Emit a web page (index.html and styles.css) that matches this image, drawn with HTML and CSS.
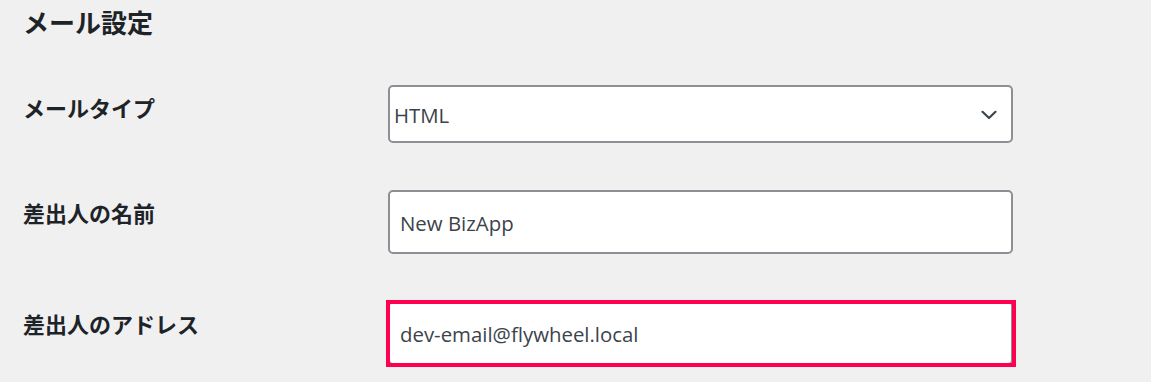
FILE: index.html
```html
<!DOCTYPE html>
<html lang="ja">
<head>
<meta charset="utf-8">
<title>メール設定</title>
<link rel="stylesheet" href="styles.css">
</head>
<body>
<main class="page">
  <h2 class="title">メール設定</h2>
  <div class="form">
    <div class="row">
      <label class="label" for="type">メールタイプ</label>
      <div class="field">
        <div class="select" id="type">
          <span class="value">HTML</span>
          <svg class="chev" width="16" height="10" viewBox="0 0 16 10" aria-hidden="true"><path d="M1.5 1.8 L8 8 L14.5 1.8" fill="none" stroke="#3c434a" stroke-width="2.2" stroke-linecap="round" stroke-linejoin="round"/></svg>
        </div>
      </div>
    </div>
    <div class="row">
      <label class="label" for="name">差出人の名前</label>
      <div class="field">
        <div class="input" id="name">New BizApp</div>
      </div>
    </div>
    <div class="row">
      <label class="label" for="addr">差出人のアドレス</label>
      <div class="field">
        <div class="input" id="addr">dev-email@flywheel.local</div>
        <div class="highlight"></div>
      </div>
    </div>
  </div>
</main>
</body>
</html>
```

FILE: styles.css
```css
html, body {
  margin: 0;
  padding: 0;
  background: #f0f0f1;
}
body {
  width: 1151px;
  height: 382px;
  overflow: hidden;
  font-family: "Noto Sans CJK JP", "Noto Sans", sans-serif;
  color: #1d2327;
}
.page {
  padding: 4px 0 0 23px;
}
.title {
  margin: 0;
  font-size: 26px;
  line-height: 36px;
  font-weight: 700;
  color: #1d2327;
}
.form {
  display: flex;
  flex-direction: column;
  gap: 47px;
  margin-top: 45px;
}
.row {
  display: flex;
  align-items: flex-start;
}
.label {
  width: 365px;
  flex: none;
  font-size: 22px;
  line-height: 30px;
  font-weight: 700;
  padding-top: 7px;
  color: #1d2327;
}
.field {
  position: relative;
  width: 625px;
}
.select, .input {
  box-sizing: border-box;
  width: 625px;
  background: #fff;
  border: 2px solid #8c8f94;
  border-radius: 5px;
  font-family: "Open Sans", "Noto Sans", sans-serif;
  font-size: 20.4px;
  color: #3c434a;
  display: flex;
  align-items: center;
}
.select {
  height: 58px;
  padding: 1px 14px 0 4px;
  justify-content: space-between;
}
.input {
  height: 64px;
  padding: 2px 10px 0;
}
.chev {
  display: block;
  margin-top: 1px;
}
.highlight {
  position: absolute;
  left: -2px;
  top: -1px;
  width: 630px;
  height: 67px;
  box-sizing: border-box;
  border: 4px solid #ff0050;
  pointer-events: none;
}
```
